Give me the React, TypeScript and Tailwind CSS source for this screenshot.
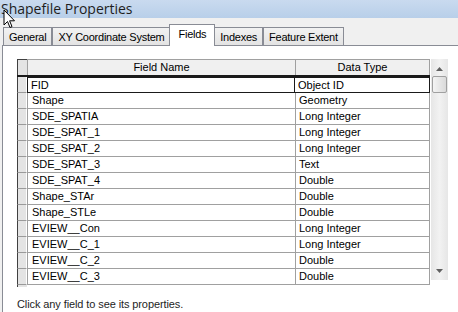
const rows: [string, string][] = [
  ['FID', 'Object ID'],
  ['Shape', 'Geometry'],
  ['SDE_SPATIA', 'Long Integer'],
  ['SDE_SPAT_1', 'Long Integer'],
  ['SDE_SPAT_2', 'Long Integer'],
  ['SDE_SPAT_3', 'Text'],
  ['SDE_SPAT_4', 'Double'],
  ['Shape_STAr', 'Double'],
  ['Shape_STLe', 'Double'],
  ['EVIEW__Con', 'Long Integer'],
  ['EVIEW__C_1', 'Long Integer'],
  ['EVIEW__C_2', 'Double'],
  ['EVIEW__C_3', 'Double'],
];

const tabs = ['General', 'XY Coordinate System', 'Fields', 'Indexes', 'Feature Extent'];

function Cursor() {
  return (
    <svg className="absolute left-[3px] top-[9px]" width="13" height="20" viewBox="0 0 13 20">
      <path d="M1 1 L1 16 L4.5 12.5 L7 18.5 L9 17.6 L6.6 11.8 L11.5 11.8 Z" fill="#fff" stroke="#000" strokeWidth="1" />
    </svg>
  );
}

export default function App() {
  return (
    <div className="relative h-[312px] w-[458px] overflow-hidden bg-[#f0f0f0] font-['Liberation_Sans',Arial,sans-serif] text-black">
      <div className="h-[18px] bg-gradient-to-b from-[#c9daef] to-[#b8cfe9] pl-[1px] font-['Open_Sans',sans-serif] text-[14px] leading-[17px] text-[#1e1e1e]">
        Shapefile Properties
      </div>

      {/* tab strip */}
      <div className="flex h-[27px] items-end pl-[3px] text-[11px] tracking-[-0.25px]">
        {tabs.map((t) =>
          t === 'Fields' ? (
            <div key={t} className="relative z-10 -mb-[1px] -ml-[1px] -mr-[1px] flex h-[22px] items-center border border-b-0 border-[#898c95] bg-white px-[8px] pb-[3px]">
              {t}
            </div>
          ) : (
            <div key={t} className="flex h-[18px] items-center border border-b-0 border-[#898c95] bg-gradient-to-b from-[#f2f2f2] to-[#e3e3e3] px-[5px] pt-[1px]">
              {t}
            </div>
          ),
        )}
      </div>

      {/* page */}
      <div className="ml-[2px] h-[267px] border-l border-t border-[#898c95] bg-white pl-[14px] pt-[13px]">
        <div className="flex">
          <div className="w-[413px] text-[11px]">
            {/* header */}
            <div className="flex h-[18px] border-b-2 border-[#1a1a1a]">
              <div className="w-[10px] border-l border-t border-[#404040] bg-[#e4e4e4]" />
              <div className="flex w-[268px] items-center justify-center border-l border-t border-[#a0a0a0] bg-[#f0f0f0]">Field Name</div>
              <div className="flex w-[135px] items-center justify-center border-x border-t border-[#a0a0a0] bg-[#f0f0f0]">Data Type</div>
            </div>
            {rows.map(([name, type], i) => (
              <div key={name} className="flex h-[16px]">
                <div className="w-[10px] border-l border-b border-r border-l-[#404040] border-b-[#9a9a9a] border-r-white bg-[#e4e4e4]" />
                <div
                  className={
                    i === 0
                      ? 'w-[268px] border border-[#1a1a1a] pl-[3px] leading-[14px]'
                      : 'w-[268px] border-b border-l border-[#a0a0a0] pl-[4px] leading-[15px]'
                  }
                >
                  {name}
                </div>
                <div
                  className={
                    i === 0
                      ? 'w-[135px] border border-l-0 border-[#1a1a1a] pl-[3px] leading-[14px]'
                      : 'w-[135px] border-x border-b border-[#a0a0a0] pl-[3px] leading-[15px]'
                  }
                >
                  {type}
                </div>
              </div>
            ))}
            <div className="h-[2px] w-[10px] border-l border-[#404040] bg-[#e4e4e4]" />
          </div>

          {/* scrollbar */}
          <div className="ml-[1px] flex h-[221px] w-[17px] flex-col items-center bg-gradient-to-r from-[#e6e6e6] via-[#f2f2f2] to-[#e6e6e6]">
            <div className="flex h-[17px] w-full items-center justify-center pt-[2px]">
              <svg width="7" height="4" viewBox="0 0 7 4"><path d="M3.5 0 L7 4 L0 4 Z" fill="#606060" /></svg>
            </div>
            <div className="h-[17px] w-[15px] rounded-[2px] border border-[#a0a0a0] bg-gradient-to-r from-[#f4f4f4] to-[#dadada]" />
            <div className="flex-1" />
            <div className="flex h-[17px] w-full items-center justify-center pb-[2px]">
              <svg width="7" height="4" viewBox="0 0 7 4"><path d="M0 0 L7 0 L3.5 4 Z" fill="#606060" /></svg>
            </div>
          </div>
        </div>

        <div className="mt-[10px] text-[11px] leading-[14px] tracking-[-0.1px] text-[#1e1e1e]">Click any field to see its properties.</div>
      </div>

      <Cursor />
    </div>
  );
}
